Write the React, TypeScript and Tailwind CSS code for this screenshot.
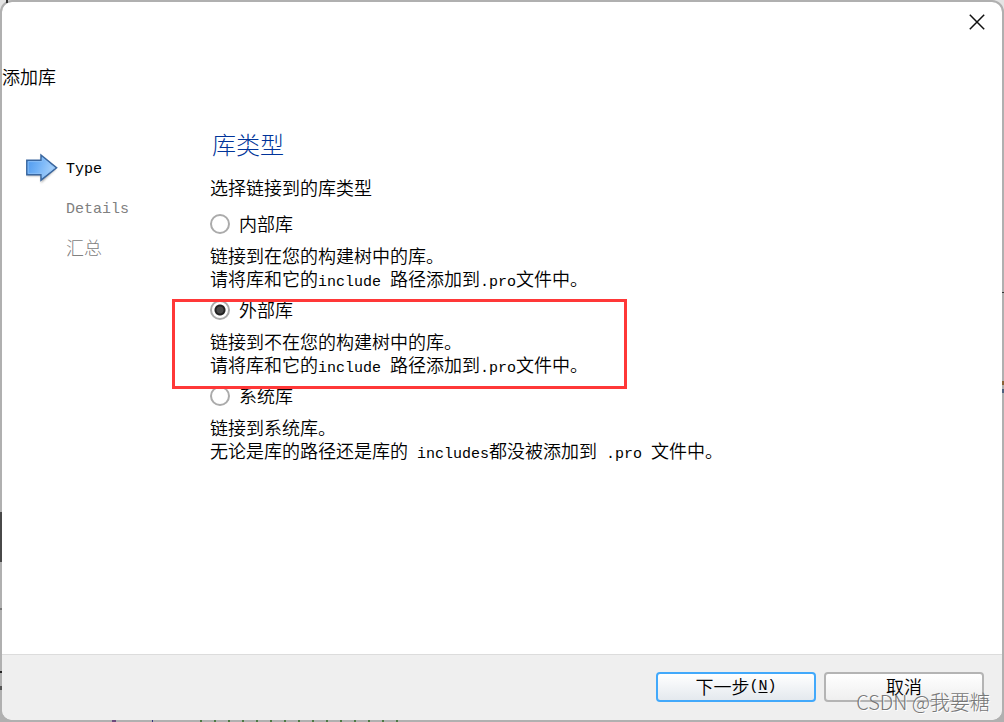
import { useState, type ReactNode } from "react";

function Latin({ children }: { children: ReactNode }) {
  return (
    <span className="whitespace-pre font-['Liberation_Mono',monospace] text-[15px] leading-none">{children}</span>
  );
}

function ArrowIcon() {
  return (
    <svg width="34" height="32" viewBox="2 1 34 32" aria-hidden="true">
      <defs>
        <linearGradient id="arrowFill" x1="0" y1="0" x2="1" y2="0.3">
          <stop offset="0" stopColor="#4a97ee" />
          <stop offset="0.45" stopColor="#6fb0f6" />
          <stop offset="1" stopColor="#a9d2fb" />
        </linearGradient>
        <filter id="arrowShadow" x="-20%" y="-20%" width="150%" height="150%">
          <feGaussianBlur stdDeviation="1.1" />
        </filter>
      </defs>
      <path d="M3 10.5H17V4.5L32 17 17 31V24H3Z" fill="#555" opacity="0.5" filter="url(#arrowShadow)" />
      <path d="M2.8 8.2H17V3L32.6 15.8 17 28.2V22.8H2.8Z" fill="url(#arrowFill)" stroke="#3a679f" strokeWidth="1.5" />
      <path d="M4.2 9.6H18.3V6L30.4 15.8 18.3 25.2V21.4H4.2Z" fill="none" stroke="#8fc0f5" strokeWidth="1" opacity="0.8" />
    </svg>
  );
}

type Option = { id: string; label: string; lines: ReactNode[]; marked?: boolean };

const options: Option[] = [
  {
    id: "internal",
    label: "内部库",
    lines: [
      "链接到在您的构建树中的库。",
      <>请将库和它的<Latin>{"include "}</Latin>路径添加到<Latin>.pro</Latin>文件中。</>,
    ],
  },
  {
    id: "external",
    label: "外部库",
    marked: true,
    lines: [
      "链接到不在您的构建树中的库。",
      <>请将库和它的<Latin>{"include "}</Latin>路径添加到<Latin>.pro</Latin>文件中。</>,
    ],
  },
  {
    id: "system",
    label: "系统库",
    lines: [
      "链接到系统库。",
      <>无论是库的路径还是库的<Latin>{" includes"}</Latin>都没被添加到<Latin>{" .pro "}</Latin>文件中。</>,
    ],
  },
];

/* Parts of the editor behind the dialog that show at its edges. */
function Backdrop() {
  return (
    <div className="absolute inset-0" aria-hidden="true">
      <div className="absolute left-0 top-0 size-3 bg-[#e4e4e4]" />
      <div className="absolute right-0 top-0 size-3 bg-[#e4e4e4]" />
    </div>
  );
}

function EdgeMarks() {
  return (
    <div className="pointer-events-none absolute inset-0" aria-hidden="true">
      <div className="absolute left-1.5 top-0 h-[3px] w-0.5 bg-[#333]" />
      <div className="absolute left-0 top-[512px] h-[50px] w-0.5 bg-[#484848]" />
      <div className="absolute left-0 top-[608px] h-0.5 w-0.5 bg-[#777]" />
      <div className="absolute left-0 top-[671px] h-0.5 w-0.5 bg-[#222]" />
      <div className="absolute left-0 top-[686px] h-1 w-0.5 bg-[#555]" />
      <div className="absolute right-0 top-[292px] h-px w-0.5 bg-[#333]" />
      <div className="absolute right-0 top-[381px] h-1 w-0.5 bg-[#8a6238]" />
      <div className="absolute right-0 top-[389px] h-1 w-0.5 bg-[#4d5f7d]" />
      <div className="absolute bottom-0 left-28 flex gap-9">
        <i className="h-0.5 w-1 bg-[#6c4a7c]" />
        <i className="h-0.5 w-px bg-[#33337c]" />
      </div>
      <div className="absolute bottom-0 left-50 flex gap-3">
        {Array.from({ length: 15 }, (_, i) => (
          <i key={i} className="h-0.5 w-0.5 bg-[#4e7a45]" />
        ))}
      </div>
    </div>
  );
}

export default function App() {
  const [selected, setSelected] = useState("external");

  return (
    <div className="relative flex min-h-screen bg-[#b0b0b0] p-0.5 font-['Noto_Sans_CJK_SC',sans-serif] text-[18px] font-[350] leading-[23px] text-black">
      <Backdrop />
      <div className="relative flex flex-1 flex-col overflow-hidden rounded-[10px] bg-white outline-2 outline-[#b0b0b0]">
        <header className="flex flex-col">
          <div className="flex h-10 items-center justify-end pr-[17px]">
            <button type="button" aria-label="关闭" className="flex size-4">
              <svg width="16" height="16" viewBox="0 0 16 16" fill="none" stroke="#111" strokeWidth="1.5" aria-hidden="true">
                <path d="M.8.8 15.2 15.2M15.2.8.8 15.2" />
              </svg>
            </button>
          </div>
          <h1 className="mt-[23px]">添加库</h1>
        </header>

        <main className="flex flex-1 pt-10">
          <nav aria-label="步骤" className="w-52 shrink-0 pl-6 pt-[21px]">
            <ol className="flex flex-col text-[#808080]">
              <li aria-current="step" className="flex h-10 items-center gap-1.5 text-black">
                <ArrowIcon />
                <Latin>Type</Latin>
              </li>
              <li className="flex h-10 items-center pl-10"><Latin>Details</Latin></li>
              <li className="flex h-9 items-center pl-10 font-light">汇总</li>
            </ol>
          </nav>

          <section className="min-w-0 flex-1">
            <h2 className="pl-0.5 text-[24px] leading-8 font-light text-[#003399]">库类型</h2>
            <p className="mt-4">选择链接到的库类型</p>
            <div role="radiogroup" aria-label="库类型" className="mt-[15px] flex flex-col gap-2.5">
              {options.map((o) => (
                <div key={o.id} className="relative">
                  <label className="flex h-5 w-fit items-center gap-[9px]">
                    <input
                      type="radio"
                      name="library"
                      checked={selected === o.id}
                      onChange={() => setSelected(o.id)}
                      className="size-5 appearance-none rounded-full border-2 border-[#ababab] bg-white checked:bg-[radial-gradient(circle,#4a4a4a_3px,#222_4px,#222_5px,transparent_6px)]"
                    />
                    <span className="pb-0.5">{o.label}</span>
                  </label>
                  <div className="mt-2.5">
                    {o.lines.map((line, i) => (
                      <p key={i} className="h-[23px]">{line}</p>
                    ))}
                  </div>
                  {o.marked && (
                    <div className="pointer-events-none absolute -left-[38px] -top-px z-10 h-[90px] w-[455px] border-3 border-[#ff3838]" />
                  )}
                </div>
              ))}
            </div>
          </section>
        </main>

        <footer className="relative flex justify-end gap-2 border-t border-[#dcdcdc] bg-[#efefef] pt-[17px] pr-[18px] pb-[18px]">
          <button type="button" className="flex h-[30px] w-40 items-center justify-center rounded border-2 border-[#42a9fb] bg-linear-to-b from-white to-[#e4e9ee] pb-0.5">
            下一步<Latin>(<u className="underline-offset-2">N</u>)</Latin>
          </button>
          <button type="button" className="flex h-[30px] w-40 items-center justify-center rounded border-2 border-[#b4b4b4] bg-linear-to-b from-white to-[#efefef] pb-0.5">
            取消
          </button>
          <p className="pointer-events-none absolute right-3 bottom-1.5 text-[20px] leading-6 font-light text-[#777] [text-shadow:1px_1px_0_#fff]">
            CSDN @我要糖
          </p>
        </footer>
      </div>
      <EdgeMarks />
    </div>
  );
}
